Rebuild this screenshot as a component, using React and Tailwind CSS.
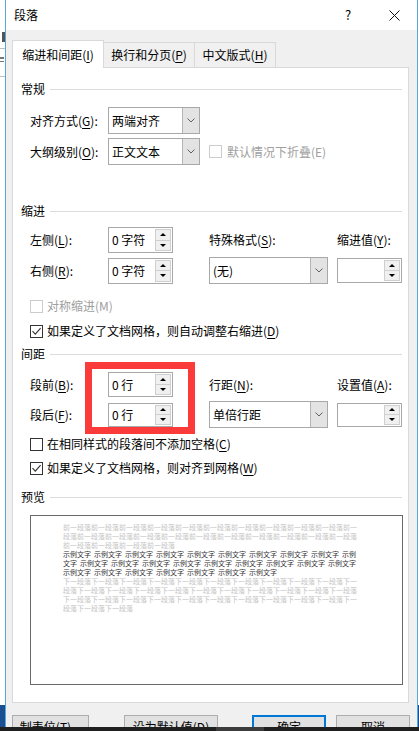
import React from 'react';

const U = ({ children }) => <span className="underline underline-offset-[2px]">{children}</span>;

function Check({ checked, disabled }) {
  return (
    <span
      className={`w-[13px] h-[13px] shrink-0 border bg-white flex items-center justify-center ${
        disabled ? 'border-[#cccccc]' : 'border-[#333333]'
      }`}
    >
      {checked && (
        <svg width="11" height="11" viewBox="0 0 11 11">
          <path d="M1.5 5.2 L4.3 8.2 L9.6 2.2" fill="none" stroke="#333333" strokeWidth="1.1" />
        </svg>
      )}
    </span>
  );
}

function Spin({ value, h = 'h-[26px]' }) {
  return (
    <div className={`w-[65px] ${h} border border-[#a8a8a8] bg-white flex items-center pl-[3px] pr-[1px]`}>
      <span className="flex-1 text-[12px]">{value}</span>
      <div className="w-[16px] h-[calc(100%-2px)] flex flex-col border border-[#cfcfcf] bg-[#f0f0f0]">
        <span className="flex-1 flex items-center justify-center border-b border-[#cfcfcf]">
          <span className="w-0 h-0 border-x-[3px] border-x-transparent border-b-[3px] border-b-black" />
        </span>
        <span className="flex-1 flex items-center justify-center">
          <span className="w-0 h-0 border-x-[3px] border-x-transparent border-t-[3px] border-t-black" />
        </span>
      </div>
    </div>
  );
}

function Combo({ value, w }) {
  return (
    <div className={`${w} h-[27px] border border-[#a8a8a8] bg-white flex`}>
      <span className="flex-1 flex items-center pl-[3px] text-[12px]">{value}</span>
      <span className="w-[17px] bg-[#e3e3e3] border-l border-[#b5b5b5] flex items-center justify-center">
        <svg width="8" height="5" viewBox="0 0 8 5">
          <path d="M0.5 0.5 L4 4 L7.5 0.5" fill="none" stroke="#606060" strokeWidth="1" />
        </svg>
      </span>
    </div>
  );
}

function Section({ title, className = '' }) {
  return (
    <div className={`h-[16px] flex items-center pl-[8px] pr-[6px] ${className}`}>
      <span>{title}</span>
      <span className="flex-1 ml-[5px] h-px bg-[#dcdcdc]" />
    </div>
  );
}

const prev = '前一段落'.repeat(25);
const next = '下一段落'.repeat(34);
const prevLines = [prev.slice(0, 42), prev.slice(42, 84), prev.slice(84)];
const nextLines = [next.slice(0, 42), next.slice(42, 84), next.slice(84, 126), next.slice(126)];
const sampleLines = [
  [...Array(9).fill('示例文字'), '示例'],
  ['文字', ...Array(9).fill('示例文字')],
  Array(7).fill('示例文字'),
];

function Preview() {
  return (
    <div className="ml-[17px] mt-[10px] w-[373px] h-[170px] border border-[#696969] bg-white pt-[7px] pl-[32px] text-[7px] leading-[9px]">
      {prevLines.map((l, i) => (
        <div key={'p' + i} className="whitespace-nowrap text-[#c4c4c4] h-[9px]">{l}</div>
      ))}
      {sampleLines.map((l, i) => (
        <div key={'s' + i} className="flex gap-[3px] whitespace-nowrap text-[#333333] h-[9px]">
          {l.map((w, j) => (
            <span key={j}>{w}</span>
          ))}
        </div>
      ))}
      {nextLines.map((l, i) => (
        <div key={'n' + i} className="whitespace-nowrap text-[#c4c4c4] h-[9px]">{l}</div>
      ))}
    </div>
  );
}

function Panel() {
  return (
    <div className="relative w-[397px] h-[636px] border border-[#d9d9d9] bg-white flex flex-col pt-[13px] text-[12px] text-black">
      <Section title="常规" />

      <div className="mt-[10px] h-[27px] flex items-center pl-[17px]">
        <span className="w-[78px]">对齐方式(<U>G</U>):</span>
        <Combo value="两端对齐" w="w-[92px]" />
      </div>
      <div className="mt-[4px] h-[27px] flex items-center pl-[17px]">
        <span className="w-[78px]">大纲级别(<U>O</U>):</span>
        <Combo value="正文文本" w="w-[92px]" />
        <span className="ml-[9px] flex items-center gap-[5px] text-[#a0a0a0]">
          <Check disabled />
          默认情况下折叠(E)
        </span>
      </div>

      <Section title="缩进" className="mt-[38px]" />
      <div className="mt-[8px] h-[26px] flex items-center pl-[17px]">
        <span className="w-[78px]">左侧(<U>L</U>):</span>
        <Spin value="0 字符" />
        <span className="ml-[36px] w-[128px]">特殊格式(<U>S</U>):</span>
        <span>缩进值(<U>Y</U>):</span>
      </div>
      <div className="mt-[4px] h-[27px] flex items-center pl-[17px]">
        <span className="w-[78px]">右侧(<U>R</U>):</span>
        <Spin value="0 字符" />
        <span className="ml-[36px]">
          <Combo value="(无)" w="w-[119px]" />
        </span>
        <span className="ml-[9px]">
          <Spin value="" h="h-[25px]" />
        </span>
      </div>
      <div className="mt-[14px] h-[16px] flex items-center pl-[17px] gap-[4px] text-[#a0a0a0]">
        <Check disabled />
        对称缩进(M)
      </div>
      <div className="mt-[9px] h-[16px] flex items-center pl-[17px] gap-[4px]">
        <Check checked />
        <span>如果定义了文档网格，则自动调整右缩进(<U>D</U>)</span>
      </div>

      <Section title="间距" className="mt-[7px]" />
      <div className="mt-[10px] h-[25px] flex items-center pl-[17px]">
        <span className="w-[78px]">段前(<U>B</U>):</span>
        <Spin value="0 行" h="h-[25px]" />
        <span className="ml-[36px] w-[128px]">行距(<U>N</U>):</span>
        <span>设置值(<U>A</U>):</span>
      </div>
      <div className="mt-[4px] h-[27px] flex items-center pl-[17px]">
        <span className="w-[78px]">段后(<U>F</U>):</span>
        <Spin value="0 行" h="h-[24px]" />
        <span className="ml-[36px]">
          <Combo value="单倍行距" w="w-[119px]" />
        </span>
        <span className="ml-[9px]">
          <Spin value="" h="h-[24px]" />
        </span>
      </div>
      <div className="mt-[8px] h-[16px] flex items-center pl-[17px] gap-[4px]">
        <Check />
        <span>在相同样式的段落间不添加空格(<U>C</U>)</span>
      </div>
      <div className="mt-[8px] h-[16px] flex items-center pl-[17px] gap-[4px]">
        <Check checked />
        <span>如果定义了文档网格，则对齐到网格(<U>W</U>)</span>
      </div>

      <Section title="预览" className="mt-[13px]" />
      <Preview />

      {/* red highlight drawn over the spacing spinners */}
      <div className="absolute left-[72px] top-[294px] w-[110px] h-[72px] border-[7px] border-[#fb3a3a]" />
    </div>
  );
}

function Dialog() {
  return (
    <div className="w-[413px] h-full shrink-0 border-x border-[#5aa7d6] bg-[#f0f0f0] flex flex-col overflow-hidden text-[12px] text-black">
      <div className="h-[30px] shrink-0 bg-white flex items-center">
        <span className="pl-[8px]">段落</span>
        <span className="ml-auto w-[46px] text-center text-[13px]">?</span>
        <span className="w-[46px] flex items-center justify-center">
          <svg width="11" height="11" viewBox="0 0 11 11">
            <path d="M0.5 0.5 L10.5 10.5 M10.5 0.5 L0.5 10.5" stroke="#111111" strokeWidth="1" />
          </svg>
        </span>
      </div>

      <div className="pt-[10px] pl-[6px] flex flex-col">
        <div className="relative z-10 h-[27px] flex items-end">
          <div className="w-[92px] h-[28px] -mb-px bg-white border-t border-x border-[#d9d9d9] flex items-center justify-center">
            缩进和间距(<U>I</U>)
          </div>
          <div className="w-[91px] h-[25px] border-t border-r border-[#d9d9d9] flex items-center justify-center">
            换行和分页(<U>P</U>)
          </div>
          <div className="w-[81px] h-[25px] border-t border-r border-[#d9d9d9] flex items-center justify-center">
            中文版式(<U>H</U>)
          </div>
        </div>
        <Panel />

        <div className="mt-[12px] flex">
          <div className="w-[77px] h-[23px] border border-[#adadad] bg-[#e1e1e1] flex items-center justify-center">
            制表位(<U>T</U>)...
          </div>
          <div className="ml-[35px] w-[94px] h-[23px] border border-[#adadad] bg-[#e1e1e1] flex items-center justify-center">
            设为默认值(<U>D</U>)
          </div>
          <div className="ml-[34px] w-[74px] h-[23px] border-2 border-[#0078d7] bg-[#e1e1e1] flex items-center justify-center">
            确定
          </div>
          <div className="ml-[10px] w-[74px] h-[23px] border border-[#adadad] bg-[#e1e1e1] flex items-center justify-center">
            取消
          </div>
        </div>
      </div>
    </div>
  );
}

export default function App() {
  return (
    <div className="w-[419px] h-[731px] overflow-hidden flex flex-col bg-white font-['Noto_Sans_CJK_SC','Liberation_Sans',sans-serif]">
      <div className="h-[727px] flex">
        {/* document behind the dialog, left edge */}
        <div className="w-[5px] shrink-0 flex flex-col bg-white">
          <div className="h-[32px]" />
          <div className="h-[10px] w-[3px] ml-[2px] bg-[#555555]" />
          <div className="mt-[6px] h-px bg-[#bdbdbd]" />
          <div className="mt-[8px] h-[2px] w-[4px] bg-[#777777]" />
          <div className="mt-[2px] h-[1px] w-[4px] bg-[#777777]" />
          <div className="mt-[14px] h-px bg-[#bdbdbd]" />
          <div className="flex-1" />
          <div className="h-[22px] bg-[#1b4f91]" />
        </div>
        <Dialog />
        <div className="w-[1px] shrink-0 flex flex-col bg-white">
          <div className="flex-1" />
          <div className="h-[22px] bg-[#1b4f91]" />
        </div>
      </div>
      {/* taskbar */}
      <div className="h-[4px] flex bg-[#1f1f1f]">
        <div className="ml-[216px] w-[48px] bg-[#3c3c3c]" />
      </div>
    </div>
  );
}
